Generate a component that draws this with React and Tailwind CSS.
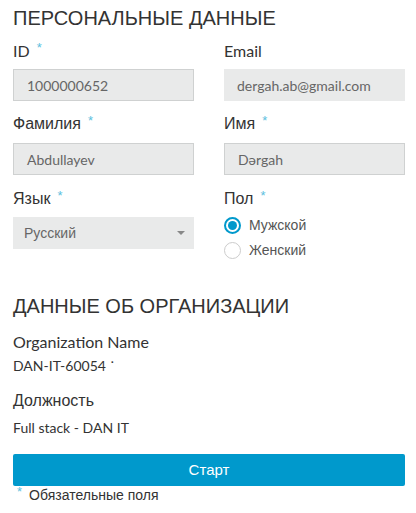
import React, { useState } from 'react';

const FONT = { fontFamily: 'Lato, "Liberation Sans", Arial, sans-serif' };
const ARIAL = { fontFamily: '"Liberation Sans", Arial, sans-serif' };

function Star() {
  return <span className="ml-[7px] mt-[1px] text-[13px] leading-[12px] text-[#5bc0de]" style={ARIAL}>*</span>;
}

function Label({ children, required, arial }) {
  return (
    <div className="h-[20px] flex items-start text-[16px] leading-[20px] text-[#333]">
      <span style={arial ? ARIAL : undefined}>{children}</span>
      {required && <Star />}
    </div>
  );
}

function Field({ value, bordered }) {
  return (
    <div
      className={
        'h-[32px] w-full flex items-center px-[13px] text-[14px] text-[#666] bg-[#e9eaea] ' +
        (bordered ? 'border border-[#cfd1d1]' : '')
      }
    >
      {value}
    </div>
  );
}

function Radio({ checked, label, onClick }) {
  return (
    <button onClick={onClick} className="flex items-center h-[25px] gap-[8px] text-[14px] text-[#555]">
      {checked ? (
        <span className="w-[17px] h-[17px] rounded-full border-2 border-[#0099cc] flex items-center justify-center">
          <span className="w-[9px] h-[9px] rounded-full bg-[#0099cc]" />
        </span>
      ) : (
        <span className="w-[17px] h-[17px] rounded-full border border-[#ccc] bg-white" />
      )}
      <span style={ARIAL}>{label}</span>
    </button>
  );
}

export default function App() {
  const [gender, setGender] = useState('m');

  return (
    <div className="w-[416px] h-[513px] bg-white pl-[13px] pr-[11px] pt-[6px]" style={FONT}>
      <h1 className="text-[20px] leading-[24px] text-[#333]" style={ARIAL}>
        ПЕРСОНАЛЬНЫЕ ДАННЫЕ
      </h1>

      <div className="grid grid-cols-2 gap-x-[30px] mt-[11px]">
        <div>
          <Label required>ID</Label>
          <div className="mt-[8px]">
            <Field value="1000000652" bordered />
          </div>
        </div>
        <div>
          <Label>Email</Label>
          <div className="mt-[8px]">
            <Field value="dergah.ab@gmail.com" />
          </div>
        </div>

        <div className="mt-[13px]">
          <Label required arial>Фамилия</Label>
          <div className="mt-[9px]">
            <Field value="Abdullayev" bordered />
          </div>
        </div>
        <div className="mt-[13px]">
          <Label required arial>Имя</Label>
          <div className="mt-[9px]">
            <Field value="Dərgah" bordered />
          </div>
        </div>

        <div className="mt-[14px]">
          <Label required arial>Язык</Label>
          <div className="mt-[8px] h-[32px] flex items-center justify-between pl-[11px] pr-[9px] bg-[#e9eaea] text-[14px] text-[#666]">
            <span style={ARIAL}>Русский</span>
            <span className="w-0 h-0 border-l-[4px] border-r-[4px] border-t-[4px] border-l-transparent border-r-transparent border-t-[#888]" />
          </div>
        </div>
        <div className="mt-[14px]">
          <Label required arial>Пол</Label>
          <div className="mt-[4px] flex flex-col items-start">
            <Radio checked={gender === 'm'} label="Мужской" onClick={() => setGender('m')} />
            <Radio checked={gender === 'f'} label="Женский" onClick={() => setGender('f')} />
          </div>
        </div>
      </div>

      <h2 className="mt-[31px] text-[20px] leading-[24px] text-[#333]" style={ARIAL}>
        ДАННЫЕ ОБ ОРГАНИЗАЦИИ
      </h2>

      <div className="mt-[14px] text-[16px] leading-[20px] text-[#333]">Organization Name</div>
      <div className="mt-[5px] text-[14px] leading-[18px] text-[#333]">DAN-IT-60054 ˙</div>

      <div className="mt-[16px] text-[16px] leading-[20px] text-[#333]" style={ARIAL}>Должность</div>
      <div className="mt-[8px] text-[14px] leading-[18px] text-[#333]">Full stack - DAN IT</div>

      <button className="mt-[17px] w-full h-[32px] rounded-[2px] bg-[#0099cc] text-white text-[15px]" style={ARIAL}>
        Старт
      </button>
      <div className="flex items-start text-[14px] leading-[16px] text-[#333]" style={ARIAL}>
        <span className="ml-[4px] mr-[7px] text-[13px] leading-[12px] text-[#5bc0de]">*</span>
        <span className="mt-[1px]">Обязательные поля</span>
      </div>
    </div>
  );
}
